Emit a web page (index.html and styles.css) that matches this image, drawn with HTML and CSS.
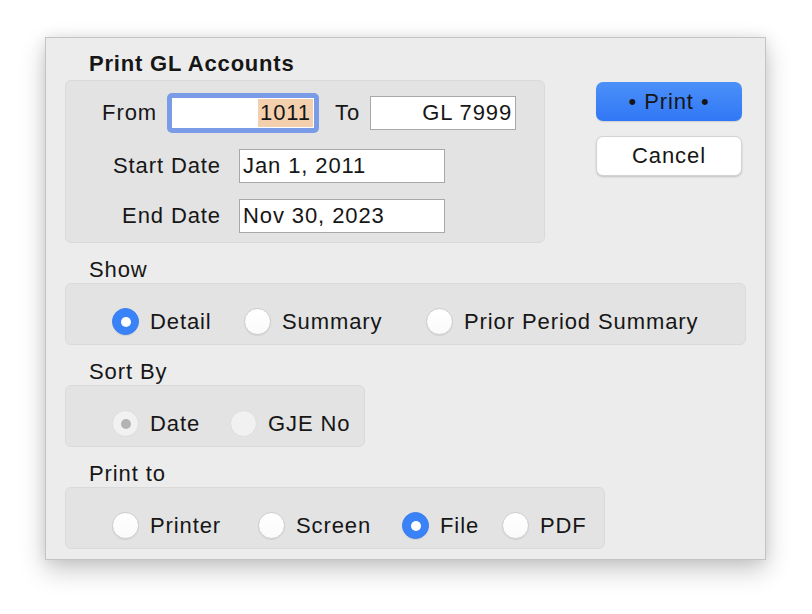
FILE: index.html
```html
<!DOCTYPE html>
<html lang="en">
<head>
    <meta charset="UTF-8">
    <title>Print GL Accounts</title>
    <link rel="stylesheet" href="styles.css">
</head>
<body>
    <div class="window">
        <div class="top">
            <div class="main">
                <div class="title">Print GL Accounts</div>
                <div class="group range">
                    <div class="row">
                        <span class="label from-label">From</span>
                        <div class="field focused"><span class="sel">1011</span></div>
                        <span class="label to-label">To</span>
                        <div class="field right to-field">GL 7999</div>
                    </div>
                    <div class="row">
                        <span class="label date-label">Start Date</span>
                        <div class="field date-field">Jan 1, 2011</div>
                    </div>
                    <div class="row">
                        <span class="label date-label">End Date</span>
                        <div class="field date-field">Nov 30, 2023</div>
                    </div>
                </div>
            </div>
            <div class="actions">
                <button class="btn primary">• Print •</button>
                <button class="btn">Cancel</button>
            </div>
        </div>

        <div class="section">
            <div class="section-label">Show</div>
            <div class="group radios show">
                <label class="opt"><span class="radio on"></span>Detail</label>
                <label class="opt"><span class="radio"></span>Summary</label>
                <label class="opt"><span class="radio"></span>Prior Period Summary</label>
            </div>
        </div>

        <div class="section">
            <div class="section-label">Sort By</div>
            <div class="group radios sort">
                <label class="opt"><span class="radio disabled on"></span>Date</label>
                <label class="opt"><span class="radio disabled"></span>GJE No</label>
            </div>
        </div>

        <div class="section">
            <div class="section-label">Print to</div>
            <div class="group radios dest">
                <label class="opt"><span class="radio"></span>Printer</label>
                <label class="opt"><span class="radio"></span>Screen</label>
                <label class="opt"><span class="radio on"></span>File</label>
                <label class="opt"><span class="radio"></span>PDF</label>
            </div>
        </div>
    </div>
</body>
</html>
```

FILE: styles.css
```css
* {
    margin: 0;
    padding: 0;
    box-sizing: border-box;
}

body {
    background: #ffffff;
    font-family: 'Liberation Sans', Arial, sans-serif;
    font-size: 22px;
    letter-spacing: 0.9px;
    color: #161616;
    padding: 37px 0 0 45px;
    min-height: 614px;
}

.window {
    width: 721px;
    height: 523px;
    background: #ececec;
    border: 1px solid #c4c4c4;
    box-shadow: 0 10px 24px rgba(0, 0, 0, 0.22), 0 0 12px rgba(0, 0, 0, 0.08);
    padding: 12px 0 0 19px;
}

.top {
    display: flex;
    align-items: flex-start;
}

.title {
    font-weight: bold;
    letter-spacing: 0.8px;
    line-height: 26px;
    padding-left: 24px;
    margin-top: 1px;
}

.group {
    background: #e3e3e3;
    border: 1px solid #dadada;
    border-radius: 6px;
}

.range {
    width: 480px;
    height: 163px;
    margin-top: 3px;
    padding-top: 12px;
}

.row {
    display: flex;
    align-items: center;
    height: 34px;
    margin-top: 16px;
}

.row:first-child {
    height: 40px;
    margin-top: 0;
}

.label {
    line-height: 26px;
}

.from-label {
    width: 91px;
    text-align: right;
    margin-right: 10px;
}

.to-label {
    margin: 0 10px 0 16px;
}

.date-label {
    width: 155px;
    text-align: right;
    margin-right: 18px;
}

.field {
    background: #ffffff;
    border: 1px solid #a8a8a8;
    height: 34px;
    line-height: 32px;
    padding: 0 3px;
    white-space: nowrap;
}

.field.right {
    text-align: right;
}

.to-field {
    width: 146px;
}

.date-field {
    width: 206px;
}

.focused {
    width: 152px;
    height: 40px;
    border: 5px solid #7a9be6;
    border-radius: 5px;
    padding: 0;
    text-align: right;
    line-height: 30px;
}

.sel {
    display: inline-block;
    background: #f4cfae;
    padding: 0 2px 0 2px;
    height: 28px;
    line-height: 28px;
    margin-right: 1px;
}

.actions {
    display: flex;
    flex-direction: column;
    gap: 15px;
    margin: 32px 0 0 51px;
}

.btn {
    width: 146px;
    height: 40px;
    font-family: inherit;
    font-size: 22px;
    letter-spacing: 0.9px;
    color: #161616;
    background: #ffffff;
    border: 1px solid #d3d3d3;
    border-radius: 7px;
    box-shadow: 0 1px 2px rgba(0, 0, 0, 0.18);
}

.btn.primary {
    height: 39px;
    border: none;
    background: linear-gradient(#4c90f9, #3077f5);
    box-shadow: 0 1px 1px rgba(0, 0, 0, 0.12);
}

.section {
    margin-top: 16px;
}

.section-label {
    line-height: 22px;
    padding-left: 24px;
    margin-bottom: 2px;
}

.radios {
    height: 62px;
    padding: 24px 0 0 46px;
    display: grid;
    align-items: center;
    align-content: start;
}

.show {
    width: 681px;
    grid-template-columns: 132px 182px auto;
}

.sort {
    width: 300px;
    grid-template-columns: 118px auto;
}

.dest {
    width: 540px;
    grid-template-columns: 146px 144px 100px auto;
}

.opt {
    display: flex;
    align-items: center;
    height: 27px;
    white-space: nowrap;
}

.radio {
    width: 27px;
    height: 27px;
    border-radius: 50%;
    background: linear-gradient(#ffffff, #fafafa);
    border: 1px solid #cdcdcd;
    box-shadow: 0 1px 1px rgba(0, 0, 0, 0.08);
    margin-right: 11px;
    display: flex;
    align-items: center;
    justify-content: center;
    flex-shrink: 0;
}

.radio.on {
    background: #3a82f7;
    border-color: #3a7ef0;
}

.radio.on::after {
    content: '';
    width: 10px;
    height: 10px;
    border-radius: 50%;
    background: #ffffff;
}

.radio.disabled {
    background: #f1f1f1;
    border-color: #dddddd;
    box-shadow: none;
}

.radio.disabled.on::after {
    background: #b3b3b3;
}
```
